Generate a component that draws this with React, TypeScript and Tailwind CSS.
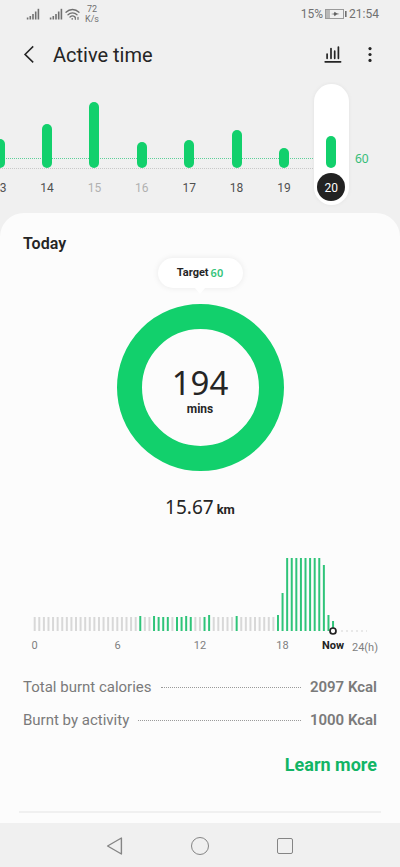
const days = [
  { day: "13", height: "h-[29px]", muted: false },
  { day: "14", height: "h-11", muted: false },
  { day: "15", height: "h-[66px]", muted: true },
  { day: "16", height: "h-[26px]", muted: true },
  { day: "17", height: "h-7", muted: false },
  { day: "18", height: "h-[38px]", muted: false },
  { day: "19", height: "h-5", muted: false },
  { day: "20", height: "h-8", muted: false, selected: true },
];

// Activity per 20-minute slot, keyed by slot index; other slots are idle.
const activeSlots: Record<number, number> = {
  23: 15, 26: 15, 27: 14, 28: 14, 29: 14, 31: 14, 32: 14, 33: 15, 34: 14,
  37: 14, 38: 16, 44: 15, 53: 16, 54: 38, 55: 73, 56: 73, 57: 73, 58: 73,
  59: 73, 60: 73, 61: 73, 62: 73, 63: 66, 64: 16, 65: 10,
};
const slotX = (i: number) => 34.7 + i * 4.59;

function Signal() {
  return (
    <svg width="14" height="12" viewBox="0 0 14 12" fill="#707070" aria-hidden="true">
      <rect x="0.8" y="9.5" width="1.6" height="2" />
      <rect x="3.5" y="8" width="1.6" height="3.5" />
      <rect x="6.2" y="6" width="1.6" height="5.5" />
      <rect x="8.9" y="3.5" width="1.6" height="8" />
      <rect x="11.6" y="0.8" width="1.6" height="10.7" />
    </svg>
  );
}

function StatusBar() {
  return (
    <div className="flex h-7 items-center pl-[26px] pr-[21px] text-xs text-[#707070]">
      <Signal />
      <span className="w-[9px]" />
      <Signal />
      <svg className="ml-0.5" width="15" height="13" viewBox="0 0 15 13" fill="none" stroke="#707070" strokeWidth="1.3" strokeLinecap="round" aria-hidden="true">
        <path d="M1 4.2C4.6.6 10.4.6 14 4.2M3 6.7c2.5-2.4 6.5-2.4 9 0M5 9c1.4-1.3 3.6-1.3 5 0" />
        <circle cx="7.2" cy="10.9" r="0.8" fill="#707070" stroke="none" />
        <path d="M10.3 9.3v2M13 9.3v2" strokeWidth="1.2" />
      </svg>
      <span className="ml-[5px] flex flex-col text-center text-[9px] leading-[10px]">
        <span>72</span>
        <span>K/s</span>
      </span>
      <span className="ml-auto">15%</span>
      <svg className="mx-0.5" width="22" height="10" viewBox="0 0 22 10" aria-hidden="true">
        <rect x="0.5" y="0.5" width="18" height="9" fill="none" stroke="#9a9a9a" />
        <rect x="1" y="1" width="4" height="8" fill="#b8b8b8" />
        <path d="M6 5l3-.5.5-1.7 2.2 1.5L14.5 5l-2.8.6-2.2 1.6L9 5.6z" fill="#606060" />
        <rect x="20" y="2" width="1.6" height="6" fill="#707070" />
      </svg>
      <span>21:54</span>
    </div>
  );
}

function Header() {
  return (
    <header className="flex h-[54px] items-center pl-5 pr-[22px] text-[#252525]">
      <button aria-label="Back" className="flex h-8 w-[33px] items-center">
        <svg width="18" height="20" viewBox="0 0 18 20" fill="none" stroke="currentColor" strokeWidth="1.5" aria-hidden="true">
          <path d="M13.2 1.4 5 9.4l8.2 8" />
        </svg>
      </button>
      <h1 className="text-xl leading-7">Active time</h1>
      <button aria-label="Trends" className="ml-auto flex h-8 w-6 items-center">
        <svg width="18" height="20" viewBox="0 0 18 20" fill="none" stroke="currentColor" strokeWidth="1.7" strokeLinecap="round" aria-hidden="true">
          <path d="M3.1 9v4.3M7 3.6v9.7M10.7 6.2v7.1M14.4 2.1v11.2M1.2 16.8h15.4" />
        </svg>
      </button>
      <button aria-label="More options" className="ml-3.5 flex h-8 w-4 items-center justify-center">
        <svg width="4" height="18" viewBox="0 0 4 18" fill="currentColor" aria-hidden="true">
          <circle cx="2" cy="2.6" r="1.6" />
          <circle cx="2" cy="8.5" r="1.6" />
          <circle cx="2" cy="14.4" r="1.6" />
        </svg>
      </button>
    </header>
  );
}

function DayStrip() {
  return (
    <section aria-label="Daily active time" className="relative flex h-[131px] items-start overflow-hidden pt-0.5">
      <div className="absolute left-0 right-[87px] top-[76px] border-t border-dotted border-[#5fd09a]" />
      <div className="absolute left-0 right-[87px] top-[86px] border-t border-dotted border-[#c8c8c8]" />
      <div className="relative -ml-6 grid flex-1 grid-cols-8 justify-items-center">
        {days.map((d) => (
          <button
            key={d.day}
            className={`flex h-[121px] w-[35px] flex-col items-center rounded-full text-xs leading-[30px] ${
              d.selected ? "bg-white shadow-[0_0_4px_rgba(0,0,0,0.06)]" : ""
            }`}
          >
            <span className="flex h-[84px] items-end">
              <span className={`w-2.5 rounded-full bg-[#12d06c] ${d.height}`} />
            </span>
            <span
              className={`mt-[5px] size-7 rounded-full ${
                d.selected ? "bg-[#222222] text-white" : d.muted ? "text-[#b0b0b0]" : "text-[#505050]"
              }`}
            >
              {d.day}
            </span>
          </button>
        ))}
      </div>
      <span className="mt-[67px] w-[45px] font-['Noto_Sans',sans-serif] text-xs leading-4 text-[#35bd78]">60</span>
    </section>
  );
}

function DayChart() {
  return (
    <svg className="mt-[30px] block w-full" viewBox="0 0 400 104" role="img" aria-label="Activity by hour">
      <g strokeWidth="2">
        {Array.from({ length: 66 }, (_, i) => (
          <line
            key={i}
            x1={slotX(i)}
            x2={slotX(i)}
            y1={77 - (activeSlots[i] ?? 14)}
            y2={77}
            stroke={activeSlots[i] ? "#2fc479" : "#d8d8d8"}
          />
        ))}
      </g>
      <path d="M341 77h26" stroke="#d4d4d4" strokeWidth="1" strokeDasharray="2 3" />
      <circle cx="333" cy="77" r="3" fill="#fcfcfc" stroke="#222222" strokeWidth="1.7" />
      <g fontSize="11" fill="#808080" textAnchor="middle">
        <text x="34.5" y="95">0</text>
        <text x="117.5" y="95">6</text>
        <text x="200" y="95">12</text>
        <text x="282.5" y="95">18</text>
        <text x="333" y="95" fill="#222222" fontWeight="700">Now</text>
        <text x="365" y="97">24(h)</text>
      </g>
    </svg>
  );
}

function Stat({ label, value }: { label: string; value: string }) {
  return (
    <div className="flex h-[33px] items-center text-[15px] text-[#7a7a7a]">
      <dt>{label}</dt>
      <dd className="flex flex-1 items-center font-semibold">
        <span className="mx-[9px] flex-1 border-t border-dotted border-[#9a9a9a]" />
        {value}
      </dd>
    </div>
  );
}

function NavBar() {
  return (
    <nav className="flex h-[45px] items-center justify-center gap-[61px] bg-[#f0f0f0] text-[#858585]">
      <button aria-label="Back" className="flex size-6 items-center justify-center">
        <svg width="18" height="20" viewBox="0 0 18 20" fill="none" stroke="currentColor" strokeWidth="1.4" strokeLinejoin="round" aria-hidden="true">
          <path d="M15.4 2v16L1.6 10z" />
        </svg>
      </button>
      <button aria-label="Home" className="flex size-6 items-center justify-center">
        <span className="size-[18px] rounded-full border border-current" />
      </button>
      <button aria-label="Recent apps" className="flex size-6 items-center justify-center">
        <span className="size-4 rounded-xs border border-current" />
      </button>
    </nav>
  );
}

export default function App() {
  return (
    <div className="min-h-screen bg-[#f0f0f0] font-[Roboto,sans-serif]">
      <StatusBar />
      <Header />
      <DayStrip />
      <main className="rounded-t-3xl bg-[#fcfcfc] pb-2.5">
        <h2 className="px-[23px] pt-[19px] text-base leading-6 font-semibold text-[#252525]">Today</h2>
        <div className="mt-0.5 flex flex-col items-center text-[#252525]">
          <div className="relative flex h-[30px] w-[85px] items-center justify-center gap-0.5 rounded-full bg-white text-[11px] font-bold shadow-[0_0_6px_rgba(0,0,0,0.08)]">
            <span>Target</span>
            <span className="font-['Noto_Sans',sans-serif] font-semibold text-[#35c47b]">60</span>
            <svg className="absolute top-full" width="10" height="6" viewBox="0 0 10 6" fill="white" aria-hidden="true">
              <path d="M0 0h10L5 6z" />
            </svg>
          </div>
          <div className="mt-4 flex size-[167px] flex-col items-center justify-center rounded-full border-[25px] border-[#12d06c] pt-1.5">
            <span className="font-['Noto_Sans',sans-serif] text-[33px] leading-9">194</span>
            <span className="text-xs leading-4 font-bold">mins</span>
          </div>
          <p className="mt-[22px] font-['Noto_Sans',sans-serif] text-[19px] leading-7">
            15.67<span className="ml-[3px] font-[Roboto,sans-serif] text-[13px] font-bold">km</span>
          </p>
        </div>
        <DayChart />
        <dl className="mt-[13px] px-[23px]">
          <Stat label="Total burnt calories" value="2097 Kcal" />
          <Stat label="Burnt by activity" value="1000 Kcal" />
        </dl>
        <div className="mt-4 flex justify-end px-[23px]">
          <a href="#learn-more" className="text-lg leading-6 font-bold text-[#12b565]">Learn more</a>
        </div>
        <hr className="mx-[19px] mt-[34px] border-t-2 border-[#f0f0f0]" />
      </main>
      <NavBar />
    </div>
  );
}
